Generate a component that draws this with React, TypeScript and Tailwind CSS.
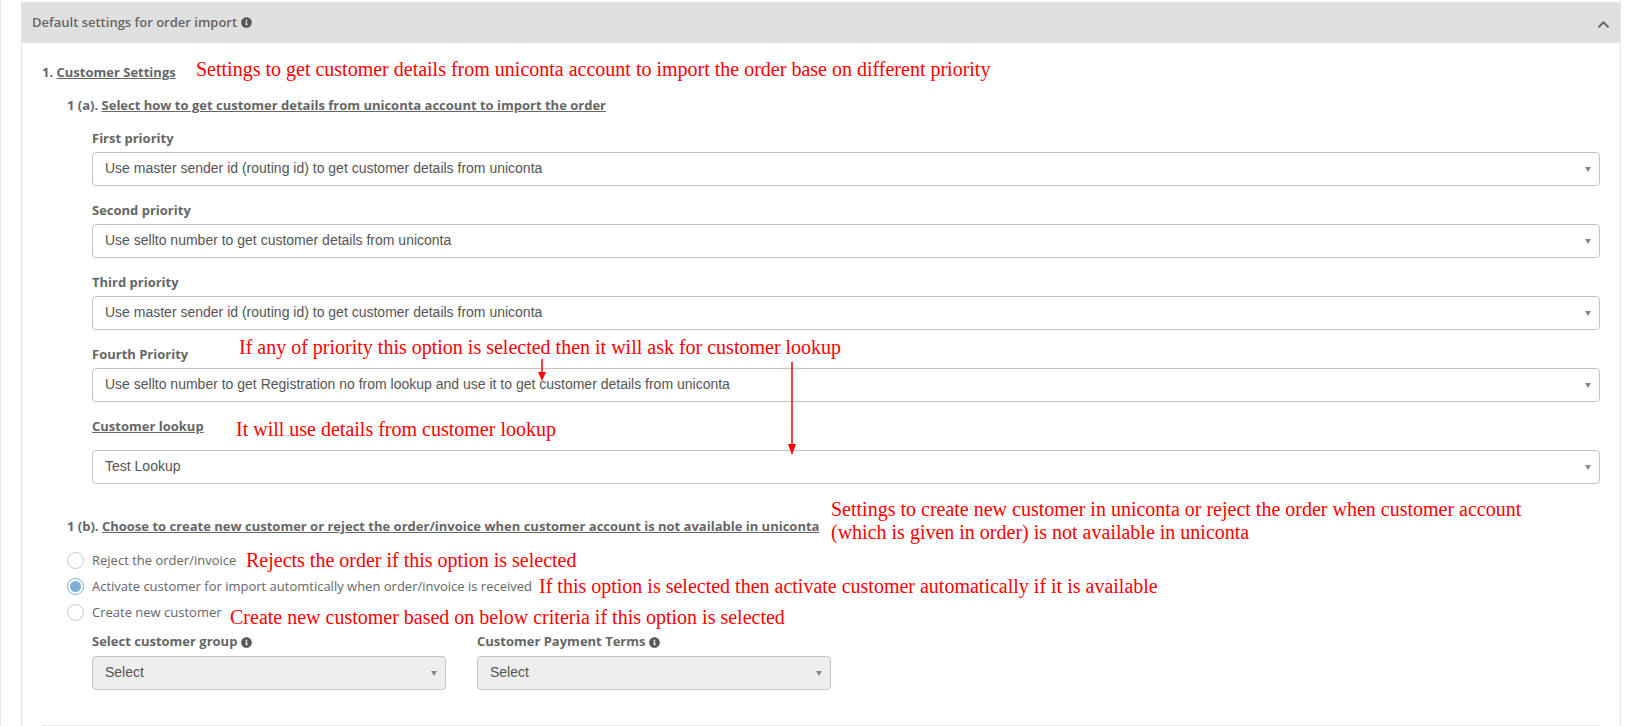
import { FaChevronUp, FaInfoCircle } from "react-icons/fa";

const sans = "font-['Open_Sans',sans-serif]";

function Dropdown({ value, disabled, className }: { value: string; disabled?: boolean; className?: string }) {
  return (
    <div
      className={`flex h-[34px] items-center justify-between rounded-[4px] border border-[#c4c4c4] pl-[12px] pr-[8px] font-['Liberation_Sans',sans-serif] text-[14px] text-[#555] ${
        disabled ? "bg-[#eeeeee]" : "bg-white"
      } ${className ?? ""}`}
    >
      <span className="pb-[2px]">{value}</span>
      <span className="h-0 w-0 border-x-[3px] border-t-[5px] border-x-transparent border-t-[#888]" />
    </div>
  );
}

function Field({ label, value }: { label: string; value: string }) {
  return (
    <div className="mb-[15px]">
      <div className="mb-[5px] h-[18px] text-[13px] leading-[18px] font-bold text-[#666]">{label}</div>
      <Dropdown value={value} />
    </div>
  );
}

function Radio({ label, checked }: { label: string; checked?: boolean }) {
  return (
    <div className="flex h-[26px] items-center gap-[8px] text-[13px] text-[#666]">
      <span
        className={`flex h-[17px] w-[17px] items-center justify-center rounded-full border bg-white ${
          checked ? "border-[#7db0d5]" : "border-[#c8c8c8]"
        }`}
      >
        {checked && <span className="h-[11px] w-[11px] rounded-full bg-[#7db0d5]" />}
      </span>
      <span className="pt-[2px]">{label}</span>
    </div>
  );
}

function Note({ className, children }: { className: string; children: React.ReactNode }) {
  return (
    <div className={`absolute font-['Liberation_Serif',serif] text-[20px] leading-[26px] whitespace-nowrap text-[#ff0000] ${className}`}>
      {children}
    </div>
  );
}

export default function App() {
  return (
    <div className={`relative h-[726px] overflow-hidden border-l border-[#e8e8e8] bg-white pr-[5px] pl-[20px] ${sans}`}>
      <div className="h-[726px] border-x border-[#e6e6e6] bg-white pt-[2px]">
        <div className="flex h-[41px] items-center justify-between rounded-[2px] bg-[#e0e0e0] pr-[10px] pl-[10px]">
          <div className="flex items-center gap-[4px] text-[13px] font-semibold text-[#666]">
            Default settings for order import
            <FaInfoCircle size={11} className="text-[#555]" />
          </div>
          <FaChevronUp size={13} className="mt-[3px] text-[#5b6b7b]" />
        </div>

        <div className="pt-[20px] pr-[20px] pl-[20px]">
          <div className="h-[18px] text-[13px] leading-[18px] font-bold text-[#666]">
            1. <span className="underline">Customer Settings</span>
          </div>
          <div className="mt-[15px] ml-[25px] h-[18px] text-[13px] leading-[18px] font-bold text-[#666]">
            1 (a). <span className="underline">Select how to get customer details from uniconta account to import the order</span>
          </div>

          <div className="mt-[15px] ml-[50px]">
            <Field label="First priority" value="Use master sender id (routing id) to get customer details from uniconta" />
            <Field label="Second priority" value="Use sellto number to get customer details from uniconta" />
            <Field label="Third priority" value="Use master sender id (routing id) to get customer details from uniconta" />
            <Field label="Fourth Priority" value="Use sellto number to get Registration no from lookup and use it to get customer details from uniconta" />
            <div className="mt-[15px]">
              <div className="mb-[15px] h-[18px] text-[13px] leading-[18px] font-bold text-[#666] underline">Customer lookup</div>
              <Dropdown value="Test Lookup" />
            </div>
          </div>

          <div className="mt-[33px] ml-[25px] h-[18px] text-[13px] leading-[18px] font-bold text-[#666]">
            1 (b). <span className="underline">Choose to create new customer or reject the order/invoice when customer account is not available in uniconta</span>
          </div>

          <div className="mt-[12px] ml-[25px]">
            <Radio label="Reject the order/invoice" />
            <Radio label="Activate customer for import automtically when order/invoice is received" checked />
            <Radio label="Create new customer" />
          </div>

          <div className="mt-[8px] ml-[50px] flex gap-[31px]">
            {["Select customer group", "Customer Payment Terms"].map((label) => (
              <div key={label} className="w-[354px]">
                <div className="mb-[5px] flex h-[18px] items-center gap-[4px] text-[13px] font-bold text-[#666]">
                  {label}
                  <FaInfoCircle size={11} className="text-[#555]" />
                </div>
                <Dropdown value="Select" disabled />
              </div>
            ))}
          </div>

          <div className="mt-[35px] border-t border-[#e6e6e6]" />
        </div>
      </div>

      <Note className="top-[56px] left-[195px]">Settings to get customer details from uniconta account to import the order base on different priority</Note>
      <Note className="top-[334px] left-[238px]">If any of priority this option is selected then it will ask for customer lookup</Note>
      <Note className="top-[416px] left-[235px]">It will use details from customer lookup</Note>
      <Note className="top-[496px] left-[830px]">Settings to create new customer in uniconta or reject the order when customer account</Note>
      <Note className="top-[519px] left-[830px]">(which is given in order) is not available in uniconta</Note>
      <Note className="top-[547px] left-[245px]">Rejects the order if this option is selected</Note>
      <Note className="top-[573px] left-[538px]">If this option is selected then activate customer automatically if it is available</Note>
      <Note className="top-[604px] left-[229px]">Create new customer based on below criteria if this option is selected</Note>

      <svg className="absolute top-[358px] left-[535px]" width="12" height="24">
        <path d="M6 1V16" stroke="#f00" strokeWidth="1.5" />
        <path d="M2 14H10L6 23Z" fill="#f00" />
      </svg>
      <svg className="absolute top-[362px] left-[785px]" width="12" height="94">
        <path d="M6 0V84" stroke="#f00" strokeWidth="1.5" />
        <path d="M2 82H10L6 93Z" fill="#f00" />
      </svg>
    </div>
  );
}
